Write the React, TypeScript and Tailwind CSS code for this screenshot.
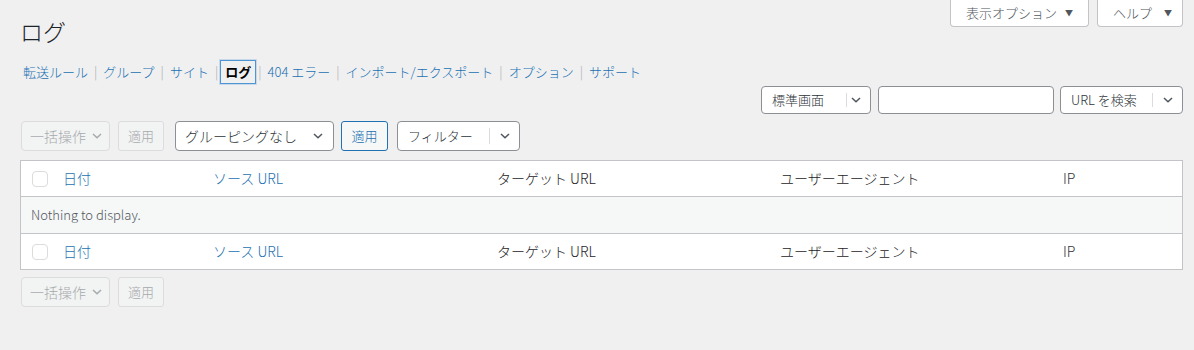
import React from "react";

const font = { fontFamily: '"Noto Sans CJK JP", "Noto Sans", sans-serif' };

function Chevron({ color = "#50575e" }: { color?: string }) {
  return (
    <svg width="10" height="6" viewBox="0 0 10 6" fill="none">
      <path d="M1 1 L5 4.8 L9 1" stroke={color} strokeWidth="1.5" />
    </svg>
  );
}

function SplitSelect({ label, width, sepAt }: { label: string; width: number; sepAt: number }) {
  return (
    <div
      className="relative flex h-full items-center rounded-[4px] border border-[#8c8f94] bg-white text-[13px] text-[#2c3338]"
      style={{ width }}
    >
      <span className="pl-[10px]">{label}</span>
      <span className="absolute top-[6px] bottom-[6px] w-px bg-[#dcdcde]" style={{ left: sepAt }} />
      <span className="absolute right-[9px] top-1/2 -translate-y-1/2 flex">
        <Chevron />
      </span>
    </div>
  );
}

function Sep({ l = 6, r = 6 }: { l?: number; r?: number }) {
  return (
    <span className="text-[#a7aaad]" style={{ marginLeft: l, marginRight: r }}>
      |
    </span>
  );
}

function HeaderRow({ top }: { top?: boolean }) {
  return (
    <div
      className={
        "flex h-[36px] items-center bg-white text-[14px] text-[#1d2327] " +
        (top ? "border-b border-[#c3c4c7]" : "border-t border-[#c3c4c7]")
      }
    >
      <div className="flex w-[33px] justify-start pl-[11px]">
        <div className="h-[16px] w-[16px] rounded-[4px] border border-[#dcdcde] bg-white" />
      </div>
      <div className="w-[150px] pl-[9px] text-[#2271b1]">日付</div>
      <div className="w-[284px] pl-[9px] text-[#2271b1]">ソース URL</div>
      <div className="w-[283px] pl-[9px]">ターゲット URL</div>
      <div className="w-[283px] pl-[9px]">ユーザーエージェント</div>
      <div className="flex-1 pl-[9px] text-[#2c3338]">IP</div>
    </div>
  );
}

function BulkRow() {
  return (
    <div className="flex h-[30px] items-stretch">
      <div className="ml-px flex w-[89px] items-center justify-between rounded-[4px] border border-[#dcdcde] bg-[#f6f7f7]/40 pl-[8px] pr-[7px] text-[14px] text-[#a7aaad]">
        <span>一括操作</span>
        <Chevron color="#a7aaad" />
      </div>
      <div className="ml-[8px] flex w-[46px] items-center justify-center rounded-[3px] border border-[#dcdcde] bg-[#f6f7f7]/40 text-[13px] text-[#a7aaad]">
        適用
      </div>
    </div>
  );
}

export default function App() {
  return (
    <div className="min-h-[350px] w-[1194px] bg-[#f0f0f1] pl-5 pr-[11px] font-light" style={font}>
      <div className="flex items-start justify-between">
        <h1 className="pt-[16px] text-[23px] leading-[30px] font-light text-[#1d2327]">ログ</h1>
        <div className="flex gap-[8px]">
          <div className="flex h-[27px] w-[139px] items-center rounded-b-[4px] border border-t-0 border-[#c3c4c7] bg-white pl-[15px] text-[13px] text-[#50575e]">
            表示オプション<span className="ml-[8px] text-[8px]">▼</span>
          </div>
          <div className="flex h-[27px] w-[86px] items-center rounded-b-[4px] border border-t-0 border-[#c3c4c7] bg-white pl-[15px] text-[13px] text-[#50575e]">
            ヘルプ<span className="ml-[12px] text-[8px]">▼</span>
          </div>
        </div>
      </div>

      <div className="mt-[14px] flex h-[24px] items-center pl-[3px] text-[13px] text-[#2271b1]">
        <span>転送ルール</span>
        <Sep />
        <span>グループ</span>
        <Sep />
        <span>サイト</span>
        <Sep l={6} r={2} />
        <span className="flex h-[24px] items-center border border-[#4f94d4] px-[4px] font-bold text-black shadow-[0_0_0_1px_rgba(79,148,212,0.25)]">
          ログ
        </span>
        <Sep l={2} r={6} />
        <span>404 エラー</span>
        <Sep />
        <span>インポート/エクスポート</span>
        <Sep />
        <span>オプション</span>
        <Sep />
        <span>サポート</span>
      </div>

      <div className="mt-[2px] flex h-[28px] justify-end">
        <SplitSelect label="標準画面" width={110} sepAt={84} />
        <div className="ml-[7px] h-full w-[176px] rounded-[4px] border border-[#8c8f94] bg-white" />
        <div className="ml-[6px] h-full">
          <SplitSelect label="URL を検索" width={123} sepAt={91} />
        </div>
      </div>

      <div className="mt-[7px] flex h-[30px] items-stretch">
        <BulkRow />
        <div className="relative ml-[11px] flex w-[159px] items-center rounded-[4px] border border-[#8c8f94] bg-white pl-[9px] text-[14px] text-[#2c3338]">
          グルーピングなし
          <span className="absolute right-[10px] top-1/2 flex -translate-y-1/2">
            <Chevron />
          </span>
        </div>
        <div className="ml-[7px] flex w-[47px] items-center justify-center rounded-[3px] border border-[#2271b1] bg-[#f6f7f7] text-[13px] text-[#2271b1]">
          適用
        </div>
        <div className="ml-[9px] h-full text-[14px]">
          <SplitSelect label="フィルター" width={123} sepAt={91} />
        </div>
      </div>

      <div className="mt-[9px] border border-[#c3c4c7]">
        <HeaderRow top />
        <div className="flex h-[36px] items-center bg-[#f6f7f7] pl-[10px] text-[13px] text-[#50575e]">
          Nothing to display.
        </div>
        <HeaderRow />
      </div>

      <div className="mt-[7px]">
        <BulkRow />
      </div>
    </div>
  );
}
